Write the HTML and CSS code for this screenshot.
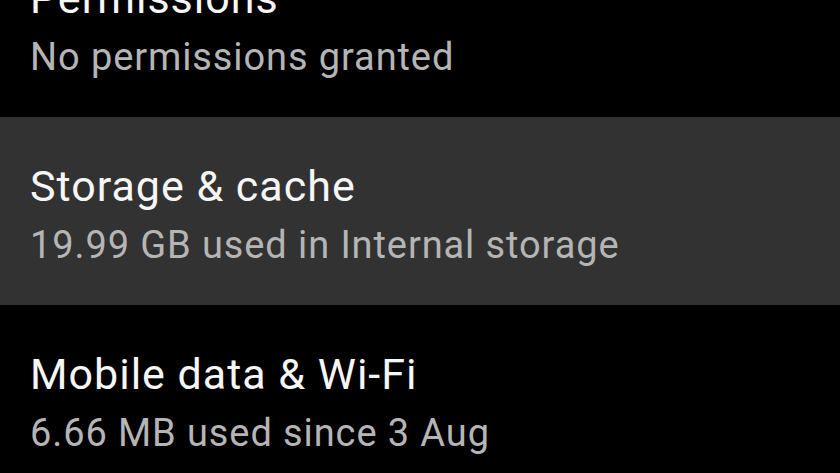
FILE: index.html
```html
<!DOCTYPE html>
<html>
<head>
<meta charset="utf-8">
<link rel="stylesheet" href="styles.css">
</head>
<body>
<div class="list">
  <div class="row">
    <div class="title">Permissions</div>
    <div class="summary">No permissions granted</div>
  </div>
  <div class="row row-active">
    <div class="title">Storage &amp; cache</div>
    <div class="summary">19.99 GB used in Internal storage</div>
  </div>
  <div class="row">
    <div class="title">Mobile data &amp; Wi-Fi</div>
    <div class="summary">6.66 MB used since 3 Aug</div>
  </div>
</div>
</body>
</html>
```
FILE: styles.css
```css
html, body {
  margin: 0;
  padding: 0;
  background: #000;
  width: 840px;
  height: 473px;
  overflow: hidden;
  font-family: Roboto, "Noto Sans", sans-serif;
}
.list {
  margin-top: -71px;
}
.row {
  height: 188px;
  box-sizing: border-box;
  padding: 44px 0 0 30px;
}
.row-active {
  background: #323232;
}
.title {
  font-size: 43px;
  line-height: 50px;
  letter-spacing: 1px;
  color: #f6f6f6;
}
.summary {
  margin-top: 9px;
  font-size: 38px;
  line-height: 50px;
  letter-spacing: 0.9px;
  color: #b5b5b5;
}
```
